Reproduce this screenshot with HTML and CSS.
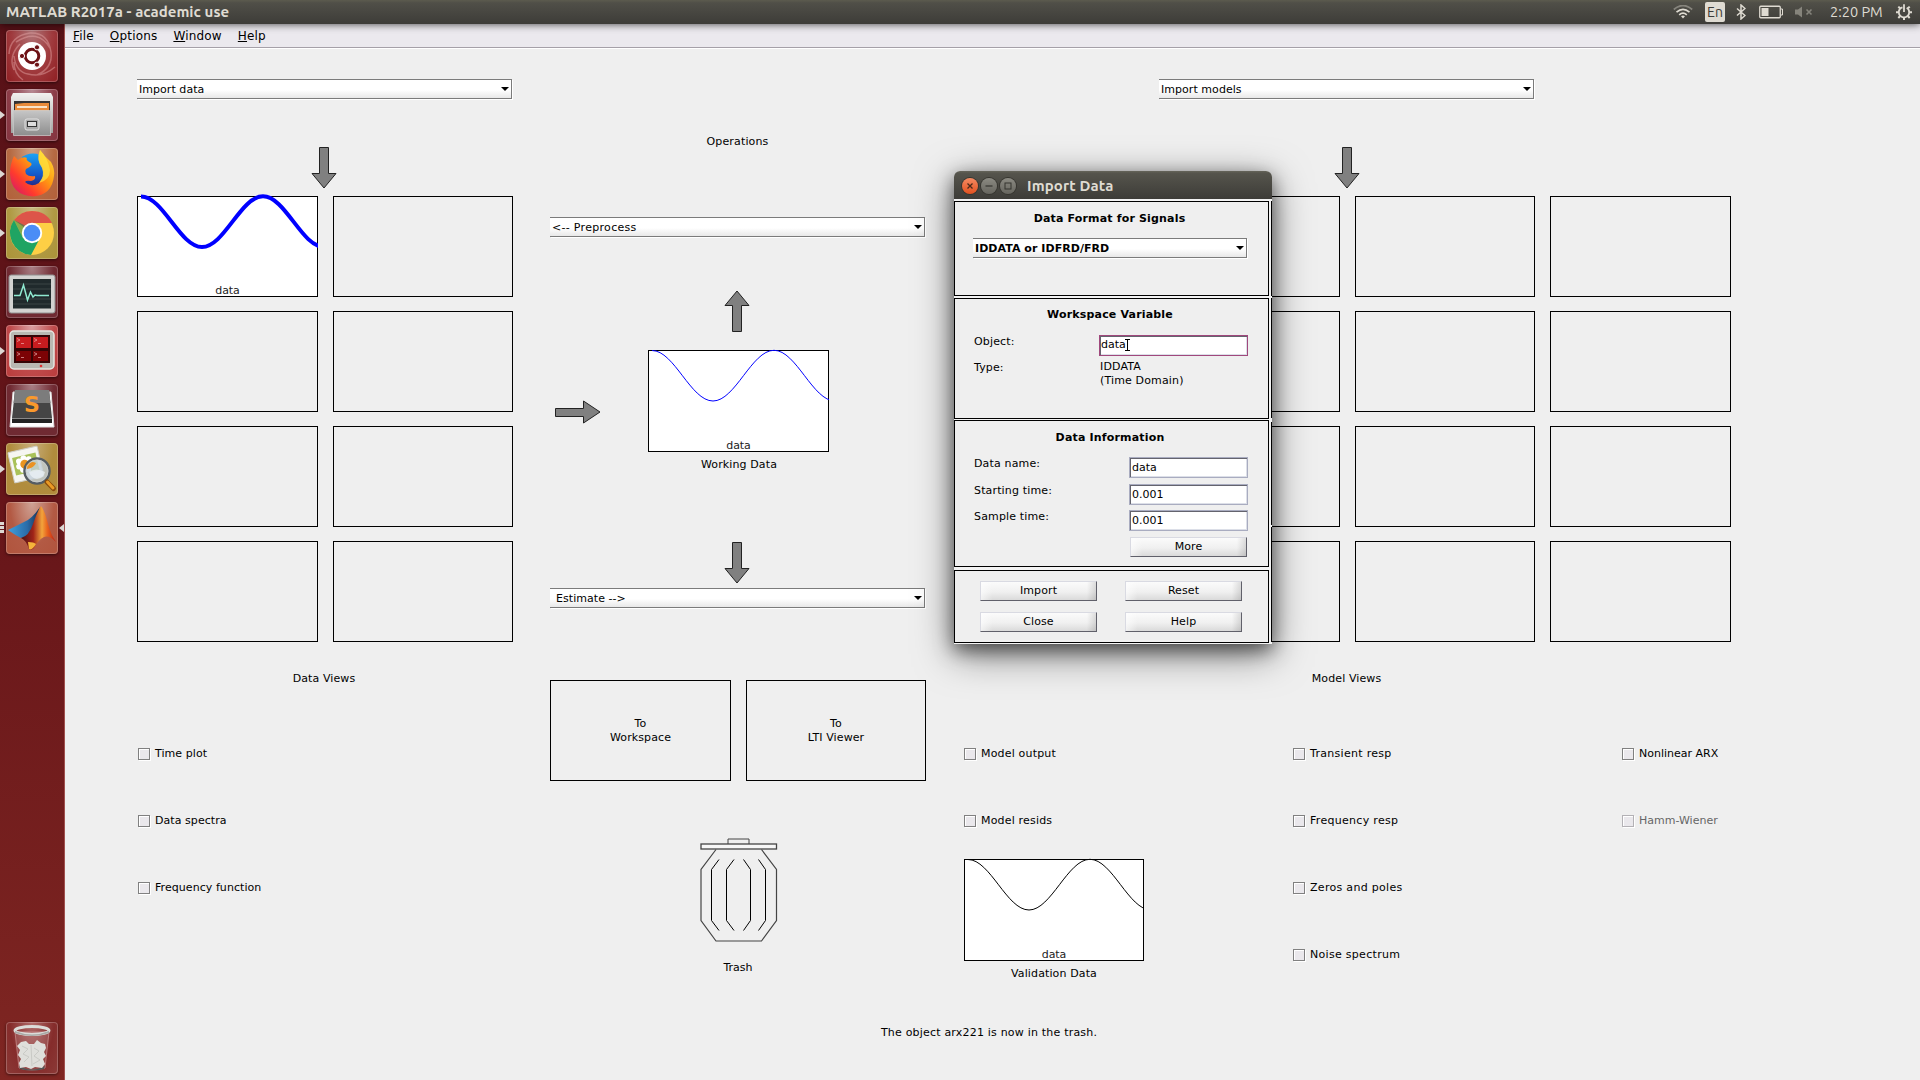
FILE: index.html
```html
<!DOCTYPE html>
<html lang="en">
<head>
<meta charset="utf-8">
<title>MATLAB R2017a - academic use</title>
<link rel="stylesheet" href="styles.css">
</head>
<body>
<svg class="defs" width="0" height="0" aria-hidden="true">
  <defs>
    <symbol id="arrow-down" viewBox="0 0 26 42"><path d="M8.5 .5H17.500V26.500H25L13 41 1 26.500H8.500Z" fill="#808080" stroke="#222"/></symbol>
    <symbol id="arrow-up" viewBox="0 0 26 42"><path d="M8.500 41.500H17.500V15.500H25L13 1 1 15.500H8.500Z" fill="#808080" stroke="#222"/></symbol>
    <symbol id="wave" viewBox="0 0 181 60"><path d="M4 5.500C26.200 5.500 42.800 56 65 56S103.800 5.300 126 5.300 164.800 56 187 56" fill="none" stroke="currentColor"/></symbol>
    <linearGradient id="metal" x2="0" y2="1"><stop stop-color="#f2f2f0"/><stop offset="1" stop-color="#a2a2a0"/></linearGradient>
    <linearGradient id="grey" x2="0" y2="1"><stop stop-color="#c6c6c6"/><stop offset="1" stop-color="#8d8d8d"/></linearGradient>
    <linearGradient id="fox" x1="1" y1="0" x2="0" y2="1"><stop stop-color="#ffe23a"/><stop offset=".4" stop-color="#ff9a12"/><stop offset=".7" stop-color="#ff3b2d"/><stop offset="1" stop-color="#c8107c"/></linearGradient>
    <linearGradient id="globe" x2="0" y2="1"><stop stop-color="#1aa3f5"/><stop offset=".6" stop-color="#1558c8"/><stop offset="1" stop-color="#2b1e78"/></linearGradient>
    <linearGradient id="peak" x2="1" y2="0"><stop stop-color="#4a1216"/><stop offset=".35" stop-color="#a02418"/><stop offset=".6" stop-color="#f2a43c"/><stop offset=".75" stop-color="#e8641e"/><stop offset="1" stop-color="#b81c14"/></linearGradient>
    <linearGradient id="wing" x2="1" y2="0"><stop stop-color="#3fa0de"/><stop offset=".6" stop-color="#2a6ca8"/><stop offset="1" stop-color="#182f50"/></linearGradient>
  </defs>
</svg>

<header class="panel">
  <span class="panel-title">MATLAB R2017a - academic use</span>
  <div class="tray">
    <svg class="wifi" width="20" height="14" viewBox="0 0 20 14" fill="none" stroke="#dfdbd2" stroke-width="1.700"><path d="M.8 4.500Q10-3.500 19.200 4.500" stroke="#86847c"/><path d="M3.500 7.200Q10 1.500 16.500 7.200M6.200 9.800Q10 6.500 13.800 9.800"/><path d="M8 11.200Q10 9.800 12 11.200L10 13.500Z" fill="#dfdbd2" stroke="none"/></svg>
    <span class="lang">En</span>
    <svg class="bt" width="10" height="16" viewBox="0 0 10 16" fill="none" stroke="#dfdbd2" stroke-width="1.500"><path d="M1 4.500 9 11.500 5 15V1L9 4.500 1 11.500"/></svg>
    <svg class="battery" width="24" height="14" viewBox="0 0 24 14"><rect x=".75" y="1.250" width="20.500" height="11.500" rx="1" fill="none" stroke="#dfdbd2" stroke-width="1.300"/><path d="M22 4H23.500V10H22" fill="none" stroke="#dfdbd2"/><rect x="2.500" y="3" width="7" height="8" fill="#dfdbd2"/></svg>
    <svg class="sound" width="18" height="12" viewBox="0 0 18 12"><path d="M0 3.500H3L7 .5V11.500L3 8.500H0Z" fill="#86847c"/><path d="M11.500 3.500 16.500 8.500M16.500 3.500 11.500 8.500" stroke="#86847c" stroke-width="1.600"/></svg>
    <span class="clock">2:20 PM</span>
    <svg class="gear" width="16" height="16" viewBox="0 0 16 16" fill="none" stroke="#dfdbd2"><circle cx="8" cy="8.300" r="5.200" stroke-width="1.800" stroke-dasharray="28.300 4.400" stroke-dashoffset="-26.700"/><path d="M8 .2V8" stroke-width="1.800"/><path d="M2.300 2.600 4 4.300M13.700 2.600 12 4.300M0 8.300H2.500M13.500 8.300H16M2.300 14 4 12.300M13.700 14 12 12.300M8 13.500V16" stroke-width="2"/></svg>
  </div>
</header>

<div class="desktop">
  <nav class="launcher">
    <div class="tile t-red"><svg viewBox="0 0 52 52"><path d="M3 24Q4 6 24 3 42 2 45 22 47 38 31 45M10 12Q32-2 44 18M8 40Q2 26 14 14M49 37Q36 48 22 44 10 42 8 26M17 50Q8 44 8 32" fill="none" stroke="#e7a9a8" stroke-opacity=".45" stroke-width="1.500"/><circle cx="26" cy="26" r="14" fill="#fff"/><circle cx="26" cy="26" r="6.800" fill="none" stroke="#6d1216" stroke-width="3"/><g fill="#6d1216" stroke="#fff" stroke-width="1"><circle cx="16" cy="26" r="2.600"/><circle cx="31" cy="17.300" r="2.600"/><circle cx="31" cy="34.700" r="2.600"/></g></svg></div>
    <div class="tile t-wine"><i class="pip"></i><svg viewBox="0 0 52 52"><path d="M7 4H45L47 8V44H5V8Z" fill="url(#metal)"/><path d="M8 12H44V22H8Z" fill="#333"/><path d="M9 15 18 14H43V22H9Z" fill="#e88b3a"/><path d="M11 17H41V19H11Z" fill="#f8e3c8"/><path d="M7 21.500H45L44.500 46.500H7.500Z" fill="url(#grey)" stroke="#d2d2d2" stroke-width=".7"/><rect x="19" y="30" width="14" height="11" rx="2" fill="#aaa" stroke="#e2e2e2"/><rect x="21.500" y="32.500" width="9" height="5" fill="#ddd" stroke="#333"/></svg></div>
    <div class="tile t-orange"><i class="pip"></i><svg viewBox="0 0 52 52"><circle cx="27" cy="23" r="17.500" fill="url(#globe)"/><path d="M4 26Q4 16 8 8L12 12Q17 8 21 10 19 12 25 15 27 17 22 20 18 21 20 26 23 29 29 28 30 32 25 33 20 32 19 34 25 40 33 35 40 28 36 19 30 12 34 2 38 8 45 14 49 21 48 28 46 47 27 48.500 5 47 4 26Z" fill="url(#fox)"/><path d="M34 2Q30 12 36 20 39 28 33 35 44 32 44 22 42 10 34 2Z" fill="#ffe33d" fill-opacity=".75"/></svg></div>
    <div class="tile t-olive"><i class="pip"></i><svg viewBox="0 0 52 52"><circle cx="26" cy="26" r="22" fill="#fdcf45"/><path d="M26 26 8 13Q15 4 26 4 40 4 46 16H27Z" fill="#dd5549"/><path d="M26 26 17 31 8 13Q1 23 6 35 12 47 25 48L33 33Z" fill="#1fa463"/><path d="M8 13 17 31 22 20Z" fill="#128a4f" opacity=".5"/><circle cx="26" cy="26" r="10.200" fill="#fff"/><circle cx="26" cy="26" r="8.300" fill="#4b8df6"/></svg></div>
    <div class="tile t-plum"><svg viewBox="0 0 52 52"><rect x="3" y="9" width="46" height="38" rx="2" fill="#d3d3d1" stroke="#909090"/><rect x="7" y="13" width="38" height="29.500" fill="#202a2c"/><path d="M7 18H45M7 23H45M7 33H45M7 38H45" stroke="#3a4544"/><path d="M8 29.500H14L17.500 19 21.500 34 24.500 26 27 31 29 29 31 29.500H43" fill="none" stroke="#8fe9d0" stroke-width="1.500"/></svg></div>
    <div class="tile t-scarlet"><i class="pip"></i><svg viewBox="0 0 52 52"><rect x="4" y="6" width="44" height="38" rx="4" fill="#b9b8b2" stroke="#e6e5e0" stroke-width="1.500"/><rect x="8" y="10" width="36" height="28" fill="#350506"/><path d="M10 12H25V23H10ZM27 12H42V23H27Z" fill="#c81c1f"/><path d="M10 26H25V36H10ZM27 26H42V36H27Z" fill="#7c0305"/><path d="M11 13.500 14 15 11 16.500M15 18.500H18M28 13.500 31 15 28 16.500M32 18.500H35M11 27.500 14 29 11 30.500M15 32.500H18M28 27.500 31 29 28 30.500M32 32.500H35" fill="none" stroke="#f0b9b9" stroke-opacity=".65"/><circle cx="35" cy="41" r="1.300" fill="#e03030"/></svg></div>
    <div class="tile t-plum"><svg viewBox="0 0 52 52"><path d="M7 8 4 43H48L45 8Z" fill="#fff" stroke="#ddd"/><path d="M9 6H43L46 34V39H6V34Z" fill="#454545"/><path d="M9 6H43L44.500 19H7.500Z" fill="#7c7c7c"/><path d="M6 34H46V39H6Z" fill="#222"/><path d="M6 34.500H46" stroke="#888"/><text x="26" y="28" text-anchor="middle" class="sublime-s">S</text></svg></div>
    <div class="tile t-gold"><i class="pip"></i><svg viewBox="0 0 52 52"><g transform="rotate(-13 20 22)"><rect x="5" y="6" width="30" height="31" rx="1" fill="#f6f6f2" stroke="#cfcfc8"/><rect x="8" y="12" width="24" height="18" fill="#a9c25a"/><g fill="#fff"><circle cx="14" cy="17" r="3"/><circle cx="19" cy="15" r="3"/><circle cx="24" cy="17" r="3"/><circle cx="13" cy="22" r="3"/><circle cx="16" cy="26" r="3"/><circle cx="21" cy="27" r="3"/></g><circle cx="19" cy="21" r="4.500" fill="#ea9420"/></g><circle cx="31" cy="28" r="12.500" fill="#c3cfda" fill-opacity=".8" stroke="#555c62" stroke-width="2.500"/><path d="M20 23Q25 17 30 20 28 25 21 26Z" fill="#eb9222"/><path d="M23 29Q30 24 39 29 38 35 31 36 25 35 23 29Z" fill="#eef3f7" fill-opacity=".7"/><circle cx="31" cy="28" r="11" fill="none" stroke="#c9cdd0" stroke-width=".8"/><path d="M41 39 47.500 45.500" stroke="#8a4c0c" stroke-width="5" stroke-linecap="round"/><path d="M41.500 39 47 45" stroke="#ea9a25" stroke-width="3" stroke-linecap="round"/></svg></div>
    <div class="tile t-coral"><i class="pips"></i><i class="pip-right"></i><svg viewBox="0 0 52 52"><path d="M2 28 18 20Q26 17 34 5L28 24Q22 35 15 36Q9 33 2 28Z" fill="url(#wing)"/><path d="M35 4Q39 9 42 22 45 33 50 40 43 33 38 35 32 38 28 46 25 49 23 47 20 38 15 36 23 34 27 22 31 10 35 4Z" fill="url(#peak)"/><path d="M22 40Q28 40 30 42 26 49 23 47Z" fill="#f4b43b"/></svg></div>
    <div class="tile t-bin"><svg viewBox="0 0 52 52"><path d="M9 10H43L39 46Q26 50 13 46Z" fill="#fff" fill-opacity=".12" stroke="#d7a3a1" stroke-width=".6"/><path d="M13 44Q26 51 39 44L38 47Q26 50 14 47Z" fill="#555"/><path d="M11 24 15 20 20 19 23 22 28 22 31 18 35 21 39 22 40 26 38 30 40 34 37 37 39 42 36 46 29 45 25 47 20 45 14 46 13 41 15 37 12 33 14 28Z" fill="#dfdfdb"/><path d="M16 24 22 27 17 32 23 35 18 40M28 26 33 29 28 34 34 38 27 42M25 23 26 44" fill="none" stroke="#c9cac5"/><ellipse cx="26" cy="8.500" rx="17" ry="4" fill="none" stroke="#dcdcd9" stroke-width="3"/><path d="M9 9Q26 16 43 9V11Q26 17 9 11Z" fill="#a9aaa7"/></svg></div>
  </nav>

  <section class="app">
    <ul class="menubar">
      <li><u>F</u>ile</li><li><u>O</u>ptions</li><li><u>W</u>indow</li><li><u>H</u>elp</li>
    </ul>
    <main class="board">
      <div class="columns">
        <section class="col data-col">
          <div class="select wide">Import data</div>
          <svg class="arrow first" width="26" height="42"><use href="#arrow-down"/></svg>
          <div class="slots two">
            <div class="slot plot"><svg class="wave thick" width="181" height="60"><use href="#wave"/></svg><span>data</span></div><div class="slot"></div>
            <div class="slot"></div><div class="slot"></div>
            <div class="slot"></div><div class="slot"></div>
            <div class="slot"></div><div class="slot"></div>
          </div>
          <h2 class="views">Data Views</h2>
          <div class="checks">
            <label class="check"><i></i>Time plot</label>
            <label class="check"><i></i>Data spectra</label>
            <label class="check"><i></i>Frequency function</label>
          </div>
        </section>

        <section class="col ops-col">
          <h2 class="ops">Operations</h2>
          <div class="select wide pre">&lt;-- Preprocess</div>
          <svg class="arrow up" width="26" height="42"><use href="#arrow-up"/></svg>
          <div class="working">
            <svg class="arrow-right" width="46" height="24" viewBox="0 0 46 24"><path d="M.5 8.500H28.500V1L45 12 28.500 23V16.500H.5Z" fill="#808080" stroke="#222"/></svg>
            <div class="slot plot tall"><svg class="wave blue" width="181" height="60"><use href="#wave"/></svg><span>data</span></div>
          </div>
          <h2 class="caption working-caption">Working Data</h2>
          <svg class="arrow down" width="26" height="42"><use href="#arrow-down"/></svg>
          <div class="select wide est">Estimate --&gt;</div>
          <div class="slots two targets">
            <div class="slot target">To<br>Workspace</div><div class="slot target">To<br>LTI Viewer</div>
          </div>
          <svg class="trash" width="78" height="105" viewBox="0 0 78 105" fill="none" stroke="#000" stroke-width="1"><path d="M28 6V1H49V6" stroke="#444"/><rect x="1" y="6" width="75.500" height="5" fill="#f7f7f7" stroke="#444" stroke-width="1.300"/><path d="M16 11.500 1 31.500V82.500L16 103H61.500L76.500 82.500V31.500L61.500 11.500" stroke="#444" stroke-width="1.200"/><path d="M19 21.500 11.500 31.500V82.500L19 92.500M34 21.500 26.500 31.500V82.500L34 92.500M43.500 21.500 50.500 31.500V82.500L43.500 92.500M58.500 21.500 65.500 31.500V82.500L58.500 92.500"/></svg>
          <h2 class="trash-label">Trash</h2>
        </section>

        <section class="col model-col">
          <div class="select wide centered">Import models</div>
          <svg class="arrow first" width="26" height="42"><use href="#arrow-down"/></svg>
          <div class="slots four">
            <div class="slot"></div><div class="slot"></div><div class="slot"></div><div class="slot"></div>
            <div class="slot"></div><div class="slot"></div><div class="slot"></div><div class="slot"></div>
            <div class="slot"></div><div class="slot"></div><div class="slot"></div><div class="slot"></div>
            <div class="slot"></div><div class="slot"></div><div class="slot"></div><div class="slot"></div>
          </div>
          <h2 class="views">Model Views</h2>
          <div class="model-checks">
            <div class="checks">
              <label class="check"><i></i>Model output</label>
              <label class="check"><i></i>Model resids</label>
              <div class="validation">
                <div class="slot plot tall"><svg class="wave black" width="180" height="60" viewBox="0 0 180 60"><use href="#wave" width="181" height="60"/></svg><span>data</span></div>
                <h2 class="caption">Validation Data</h2>
              </div>
            </div>
            <div class="checks resp">
              <label class="check"><i></i>Transient resp</label>
              <label class="check"><i></i>Frequency resp</label>
              <label class="check"><i></i>Zeros and poles</label>
              <label class="check"><i></i>Noise spectrum</label>
            </div>
            <div class="checks">
              <label class="check"><i></i>Nonlinear ARX</label>
              <label class="check off"><i></i>Hamm-Wiener</label>
            </div>
          </div>
        </section>
      </div>
      <p class="status">The object arx221 is now in the trash.</p>
    </main>
  </section>
</div>

<div class="dialog">
  <div class="titlebar">
    <span class="wbtn close"><svg width="16" height="16" viewBox="0 0 16 16"><path d="M5.500 5.500 10.500 10.500M10.500 5.500 5.500 10.500" stroke="#4a2a1c" stroke-width="1.300"/></svg></span>
    <span class="wbtn"><svg width="16" height="16" viewBox="0 0 16 16"><path d="M4.500 8H11.500" stroke="#35342f" stroke-width="1.200"/></svg></span>
    <span class="wbtn"><svg width="16" height="16" viewBox="0 0 16 16"><rect x="5" y="5" width="6" height="6" fill="none" stroke="#35342f"/></svg></span>
    <span class="dialog-title">Import Data</span>
  </div>
  <div class="dialog-body">
    <div class="groups">
      <section class="group format">
        <h3>Data Format for Signals</h3>
        <div class="select bold">IDDATA or IDFRD/FRD</div>
      </section>
      <section class="group variable">
        <h3>Workspace Variable</h3>
        <div class="field"><span>Object:</span><div class="input focus">data<svg class="ibeam" width="5" height="12" viewBox="0 0 5 12"><path d="M0 .5H5M0 11.500H5M2.500 0V12" stroke="#000"/></svg></div></div>
        <div class="field type"><span>Type:</span><div class="value">IDDATA<br>(Time Domain)</div></div>
      </section>
      <section class="group info">
        <h3>Data Information</h3>
        <div class="field"><span>Data name:</span><div class="input">data</div></div>
        <div class="field second"><span>Starting time:</span><div class="input">0.001</div></div>
        <div class="field third"><span>Sample time:</span><div class="input">0.001</div></div>
        <div class="btn more">More</div>
      </section>
      <section class="group actions">
        <div class="btn">Import</div><div class="btn">Reset</div>
        <div class="btn">Close</div><div class="btn">Help</div>
      </section>
    </div>
    <div class="edge"><i class="e1"></i><i class="e2"></i><i class="e3"></i><i class="e4"></i></div>
  </div>
</div>
</body>
</html>
```
FILE: styles.css
```css
* { box-sizing: border-box; }
body { margin: 0; width: 1920px; height: 1080px; overflow: hidden; position: relative; background: #efefef; font: 11px/14px "DejaVu Sans", sans-serif; color: #000; }
h2, h3, p, ul { margin: 0; padding: 0; font-size: 11px; font-weight: normal; list-style: none; }
h3 { font-weight: bold; text-align: center; }
svg { display: block; flex: none; }
.defs { position: absolute; }

/* top panel */
.panel { display: flex; justify-content: space-between; align-items: center; height: 24px; padding: 0 8px 0 6px; background: linear-gradient(#5c5b4e, #504f48 12%, #3d3c38); box-shadow: 0 0 8px rgba(0,0,0,.75); position: relative; z-index: 1; color: #dfdbd2; }
.panel-title { font: bold 15px/24px "Ubuntu", "Noto Sans", sans-serif; letter-spacing: .05px; }
.tray { display: flex; align-items: center; }
.lang { width: 20px; height: 20px; margin: 0 11px 0 12px; border-radius: 2px; background: #dfdbd2; color: #3c3b37; font: 14px/21px "Ubuntu", "Noto Sans", sans-serif; text-align: center; }
.battery { margin-left: 13px; }
.sound { margin: 0 17px 0 12px; }
.clock { width: 66px; font: 14.500px/24px "Ubuntu", "Noto Sans", sans-serif; white-space: nowrap; }

.desktop { display: flex; height: 1056px; }

/* launcher */
.launcher { display: flex; flex-direction: column; gap: 7px; width: 65px; padding: 6px 0 6px 6px; border-right: 1px solid #a0504e; background: linear-gradient(#571117, #661519 45%, #7f2622); }
.tile { position: relative; width: 52px; height: 52px; border-radius: 4px; box-shadow: inset 0 0 0 1px rgba(255,255,255,.22), 0 1px 3px rgba(0,0,0,.5); }
.tile svg { width: 52px; height: 52px; }
.t-red { background: radial-gradient(ellipse at 50% 0, #b07578, #a03b3e 55%, #8f1e22); }
.t-wine { background: radial-gradient(ellipse at 50% 0, #b78a93, #8c3d48 60%, #843440); }
.t-orange { background: radial-gradient(ellipse at 50% 0, #cfa184, #b56a43 60%, #b2603a); }
.t-olive { background: radial-gradient(ellipse at 50% 0, #c9bb82, #b09a44 60%, #ab9338); }
.t-plum { background: radial-gradient(ellipse at 50% 0, #a98086, #702a32 60%, #6f2a32); }
.t-scarlet { background: radial-gradient(ellipse at 50% 0, #dba0a2, #bf4a4b 60%, #b93c3c); }
.t-gold { background: radial-gradient(ellipse at 50% 0, #c7ad7a, #b08c3d 60%, #b38d3c); }
.t-coral { background: radial-gradient(ellipse at 50% 0, #cfa497, #b35a44 60%, #b0543d); }
.t-bin { margin-top: auto; background: radial-gradient(ellipse at 50% 0, #b06a69, #852c2b 60%, #8b3a37); }
.pip { position: absolute; left: -6px; top: 22px; border: 4px solid transparent; border-left: 5px solid #dcd8d4; border-right: 0; }
.pips { position: absolute; left: -6px; top: 20px; width: 4px; height: 11px; background: repeating-linear-gradient(#dcd8d4 0 3px, transparent 3px 4px); }
.pip-right { position: absolute; right: -6px; top: 22px; border: 4px solid transparent; border-right: 5px solid #dcd8d4; border-left: 0; }
.sublime-s { font: bold 22px "DejaVu Sans", sans-serif; fill: #f9992c; }

/* application window */
.app { flex: 1; display: flex; flex-direction: column; }
.menubar { display: flex; height: 25px; padding: 4px 0 0 8px; background: #ebe9ee; border-bottom: 1px solid #fff; box-shadow: inset 0 -1px #a5a0a8; font-size: 12px; line-height: 16px; }
.menubar li { font-size: 12px; margin-right: 16px; letter-spacing: .18px; }
.menubar u { text-underline-offset: 1px; }
.board { flex: 1; padding: 30px 0 0 72px; }
.columns { display: flex; height: 947px; }
.col { display: flex; flex-direction: column; align-items: center; width: 376px; margin-right: 37px; }
.ops-col { margin-right: 38px; }
.model-col { width: 767px; margin-right: 0; }

.select { position: relative; align-self: stretch; height: 20px; margin-right: 1px; padding-left: 2px; line-height: 19px; background: linear-gradient(#fff 55%, #e8e8e8); border: 1px solid #7b7b7b; border-left: 0; box-shadow: 1px 1px #fff; letter-spacing: .05px; }
.select::after { content: ""; position: absolute; right: 2px; top: 7px; border: 4px solid transparent; border-top-color: #000; border-bottom: 0; }
.pre { letter-spacing: .3px; }
.select.centered { align-self: center; width: 375px; margin-right: 2px; }
.arrow { margin-right: 2px; }
.arrow.first { margin-top: 48px; }
.slots { display: grid; gap: 14px 15px; }
.arrow.first + .slots { margin-top: 7px; }
.two { grid-template-columns: 181px 180px; }
.four { grid-template-columns: 180px 181px 180px 181px; }
.slot { height: 101px; border: 1px solid #000; }
.slot.tall { height: 102px; width: 181px; }
.validation .tall { width: 180px; }
.plot { display: flex; flex-direction: column; justify-content: space-between; align-items: center; background: #fff; }
.wave { margin: -6px -1px 0; color: #000; }
.wave.thick { color: #00f; stroke-width: 4px; }
.wave.blue { color: #00f; }
.plot span { line-height: 11px; color: #222; letter-spacing: -.1px; }
.tall span { line-height: 10px; }
.views { margin-top: 30px; padding-right: 2px; letter-spacing: .1px; }
.checks { display: flex; flex-direction: column; gap: 53px; align-self: stretch; }
.views + .checks, .model-checks { margin-top: 61px; }
.check { display: flex; align-items: center; height: 14px; padding-left: 1px; white-space: nowrap; letter-spacing: .06px; }
.model-checks .check { padding-left: 0; }
.model-checks .check { letter-spacing: .18px; }
.model-checks .resp .check { letter-spacing: .3px; }
.model-checks .checks:last-child .check { letter-spacing: 0; }
.check i { width: 12px; height: 12px; margin-right: 5px; border: 1px solid #808080; background: #eae8ec; box-shadow: 1px 1px #fff, inset 1px 1px #fff; }
.check.off { color: #666; }
.check.off i { border-color: #b3b1b5; }
.model-checks { display: grid; grid-template-columns: 329px 329px 109px; align-self: stretch; }
.validation { width: 180px; margin-top: -22px; text-align: center; }

/* operations column */
.ops { margin-top: 56px; padding-right: 1px; letter-spacing: .15px; }
.pre { margin-top: 68px; }
.est { padding-left: 6px; margin-top: 4px; }
.arrow.up { margin-top: 53px; }
.working { display: flex; align-self: stretch; padding-left: 5px; gap: 47px; margin-top: 18px; }
.arrow-right { margin-top: 50px; }
.caption { margin-top: 6px; letter-spacing: .12px; }
.working-caption { padding-left: 2px; }
.arrow.down { margin-top: 70px; }
.targets { margin-top: 72px; }
.target { display: flex; align-items: center; justify-content: center; text-align: center; padding-top: 1px; letter-spacing: .1px; }
.trash { margin: 57px 0 0 2px; }
.trash-label { margin-top: 18px; }
.status { text-align: center; width: 1704px; letter-spacing: .2px; }

/* import dialog */
.dialog { position: absolute; z-index: 2; left: 954px; top: 171px; width: 318px; height: 473px; border-radius: 6px 6px 0 0; background: #f3f3f3; box-shadow: 0 10px 38px rgba(0,0,0,.5), 0 6px 18px rgba(0,0,0,.5); }
.titlebar { display: flex; align-items: center; gap: 3px; height: 28px; padding: 1px 0 0 8px; border-radius: 6px 6px 0 0; background: linear-gradient(#66655a, #55544c 8%, #3d3c38); }
.wbtn { width: 16px; height: 16px; border-radius: 50%; background: linear-gradient(#8b8a82, #66655e); box-shadow: 0 0 0 1px #36352f; }
.wbtn.close { background: linear-gradient(#f58a62, #e2511f); }
.dialog-title { margin-left: 8px; color: #dfdbd2; font: bold 15px/27px "Ubuntu", "Noto Sans", sans-serif; letter-spacing: .12px; }
.dialog-body { display: flex; justify-content: space-between; padding-top: 2px; }
.groups { width: 315px; display: flex; flex-direction: column; }
.group { border: 1px solid #000; background: #efefef; }
h3 { letter-spacing: .17px; padding-right: 2px; }
.format { height: 95px; padding: 10px 20px 0 18px; }
.format .select { margin: 12px 1px 0 0; font-weight: bold; }
.variable { height: 121px; margin-top: 2px; padding: 9px 20px 0 19px; }
.field { display: flex; justify-content: space-between; align-items: flex-start; letter-spacing: .15px; }
.variable h3 + .field { margin-top: 13px; }
.field.type { margin-top: 5px; }
.value { width: 149px; margin-top: -1px; padding-left: 1px; }
.input { display: flex; align-items: center; width: 119px; height: 21px; background: #fff; border: 1px solid #a9acc0; box-shadow: inset 1px 1px #64646e, inset -1px -1px #dcdfe8; letter-spacing: 0; padding-left: 2px; }
.input.focus { width: 149px; border-color: #a0487c; padding: 0 0 1px 1px; }
.ibeam { margin-left: -1px; }
.info { height: 147px; margin-top: 1px; padding: 10px 20px 0 19px; }
.info h3 + .field { margin-top: 12px; }
.second { margin-top: 6px; }
.third { margin-top: 5px; }
.btn { height: 20px; width: 117px; line-height: 18px; text-align: center; border: 1px solid #d9dae2; border-right-color: #60606a; border-bottom-color: #60606a; background: linear-gradient(90deg, rgba(255,255,255,.6), transparent 10%, transparent 92%, rgba(0,0,0,.12)), linear-gradient(#fbfbfb, #f0f0f0 55%, #dadada); letter-spacing: .1px; }
.more { margin: 6px 1px 0 auto; }
.actions { display: grid; grid-template-columns: 117px 117px; gap: 11px 28px; align-content: start; height: 73px; margin-top: 3px; padding: 10px 0 0 25px; }
.edge { width: 1px; display: flex; flex-direction: column; }
.edge i { background: #000; }
.e1 { height: 95px; }
.e2 { height: 120px; margin-top: 2px; }
.e3 { height: 103px; margin-top: 4px; }
.e4 { height: 115px; margin-top: 2px; }
```
